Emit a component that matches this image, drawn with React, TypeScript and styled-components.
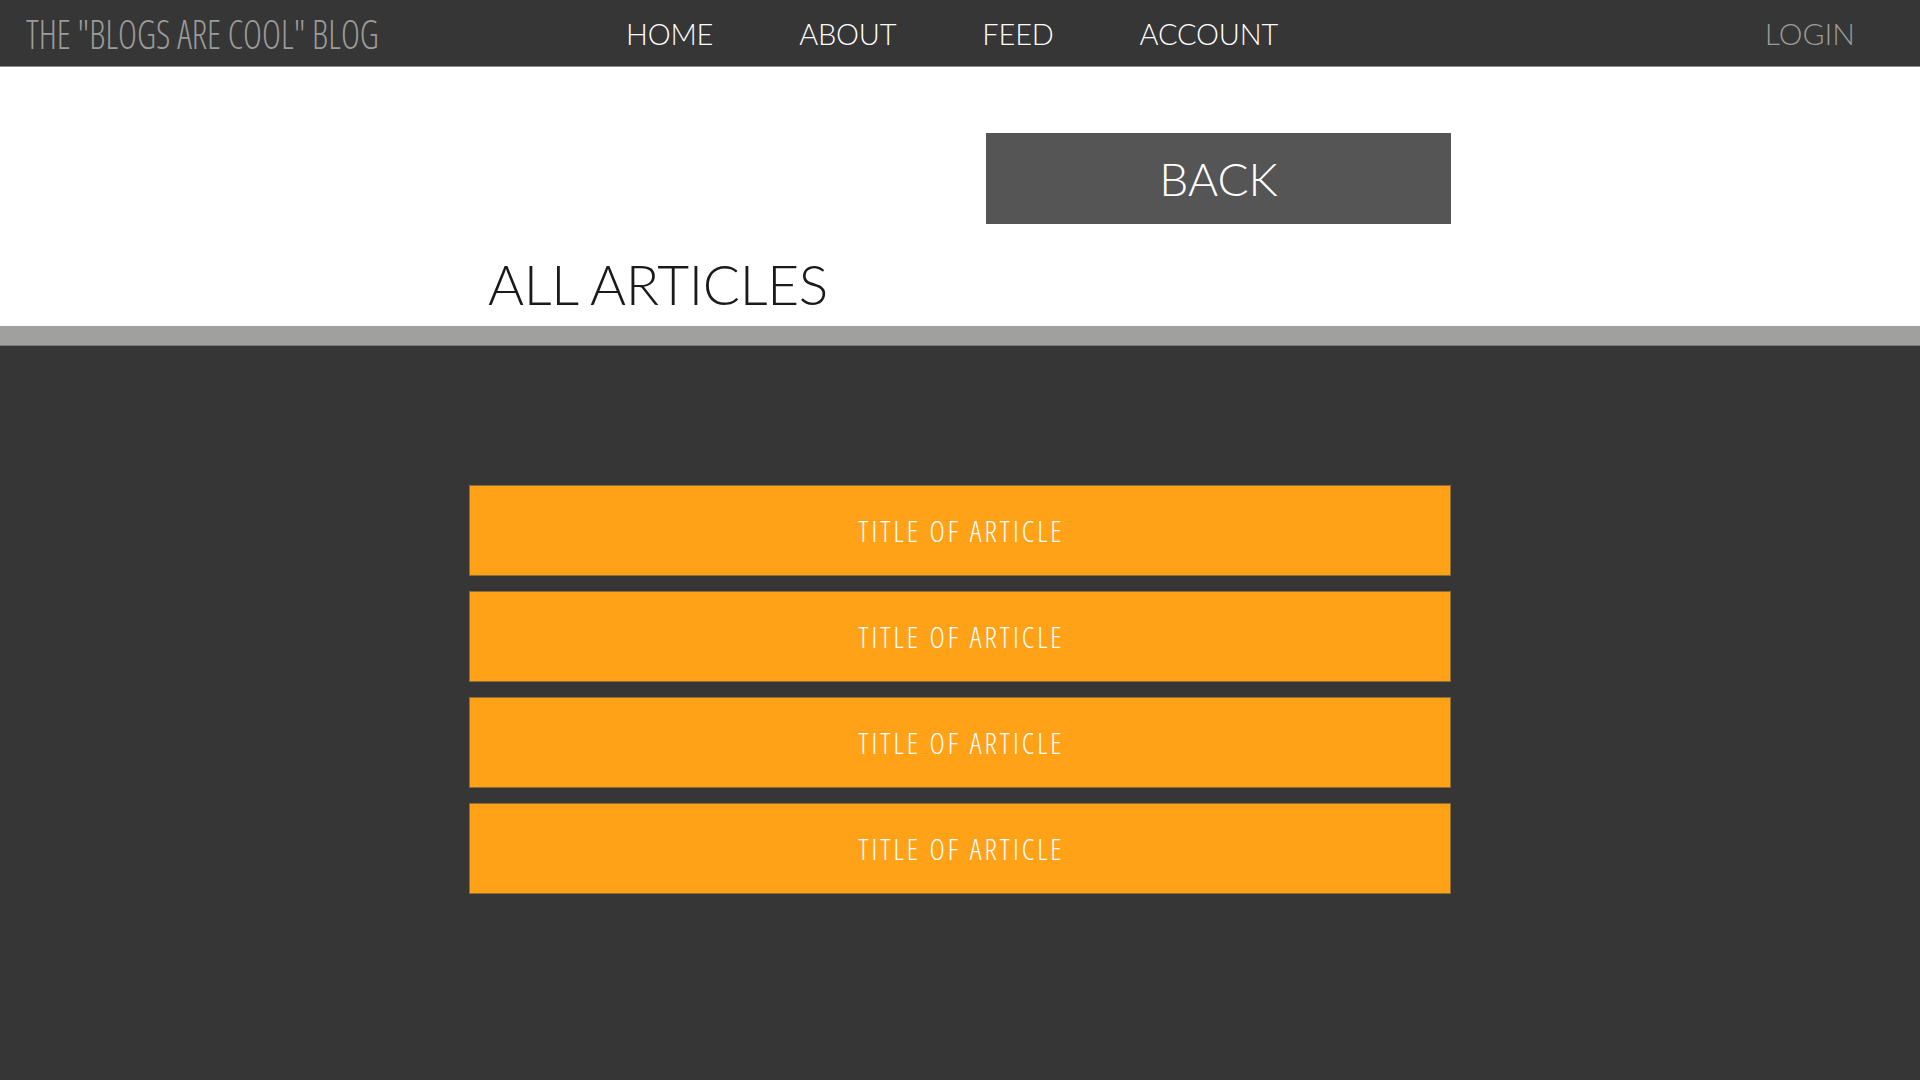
import { createGlobalStyle, styled } from "styled-components";

const GlobalStyle = createGlobalStyle`
  html, body {
    margin: 0;
    padding: 0;
    background: #363636;
  }
  * {
    box-sizing: border-box;
  }
`;

const navLinks = ["HOME", "ABOUT", "FEED", "ACCOUNT"];
const articles = [1, 2, 3, 4];

export default function App() {
  return (
    <>
      <GlobalStyle />
      <Page>
        <Header>
          <BrandBox>
            <Brand>THE "BLOGS ARE COOL" BLOG</Brand>
          </BrandBox>
          <Nav>
            {navLinks.map((link) => (
              <NavLink key={link}>{link}</NavLink>
            ))}
          </Nav>
          <Login>LOGIN</Login>
        </Header>

        <TopSection>
          <Column>
            <BackRow>
              <BackButton>BACK</BackButton>
            </BackRow>
            <Title>ALL ARTICLES</Title>
          </Column>
        </TopSection>
        <Divider />

        <ListSection>
          <ArticleList>
            {articles.map((id) => (
              <ArticleBar key={id}>TITLE OF ARTICLE</ArticleBar>
            ))}
          </ArticleList>
        </ListSection>
      </Page>
    </>
  );
}

const Page = styled.div`
  min-height: 1080px;
  display: flex;
  flex-direction: column;
  background: #363636;
`;

const Header = styled.header`
  height: 67px;
  display: grid;
  grid-template-columns: minmax(0, 1fr) auto minmax(0, 1fr);
  align-items: center;
  padding: 0 26px;
  background: #363636;
  border-bottom: 1px solid #8a8a8a;
`;

const BrandBox = styled.div`
  white-space: nowrap;
`;

// condensed display face, squeezed a touch more to match the logo width
const Brand = styled.span`
  display: inline-block;
  transform: scaleX(0.9);
  transform-origin: left center;
  font-family: "Open Sans", "Liberation Sans", sans-serif;
  font-stretch: 75%;
  font-weight: 300;
  font-size: 40px;
  color: #9b9b9b;
`;

const Nav = styled.nav`
  display: flex;
  gap: 86px;
  margin-left: -16px;
`;

const NavLink = styled.a`
  font-family: "Lato", "Liberation Sans", sans-serif;
  font-weight: 300;
  font-size: 29px;
  letter-spacing: -0.2px;
  color: #ffffff;
  cursor: pointer;
`;

const Login = styled.a`
  justify-self: end;
  margin-right: 39px;
  font-family: "Lato", "Liberation Sans", sans-serif;
  font-weight: 300;
  font-size: 30px;
  color: #9b9b9b;
  cursor: pointer;
`;

const TopSection = styled.section`
  background: #ffffff;
  padding-top: 66px;
  height: 259px;
`;

const Column = styled.div`
  width: 982px;
  margin: 0 auto;
`;

const BackRow = styled.div`
  display: flex;
  justify-content: flex-end;
`;

const BackButton = styled.button`
  width: 465px;
  height: 91px;
  border: 0;
  background: #555555;
  color: #ffffff;
  font-family: "Lato", "Liberation Sans", sans-serif;
  font-weight: 300;
  font-size: 46px;
  cursor: pointer;
`;

const Title = styled.h1`
  margin: 33px 0 0 19px;
  font-family: "Lato", "Liberation Sans", sans-serif;
  font-weight: 300;
  font-size: 55px;
  letter-spacing: -0.3px;
  line-height: 1;
  color: #1a1a1a;
`;

const Divider = styled.div`
  height: 20px;
  background: #a0a09f;
  border-bottom: 1px solid #7d7d7d;
`;

const ListSection = styled.section`
  flex: 1;
  padding-top: 139px;
`;

const ArticleList = styled.div`
  width: 982px;
  margin: 0 auto;
  display: flex;
  flex-direction: column;
  gap: 15px;
`;

const ArticleBar = styled.div`
  height: 91px;
  display: flex;
  align-items: center;
  justify-content: center;
  padding-left: 3px;
  background: #ffa218;
  border: 1px solid #8f6b35;
  font-family: "Open Sans", "Liberation Sans", sans-serif;
  font-stretch: 80%;
  font-weight: 300;
  font-size: 29px;
  letter-spacing: 3px;
  color: #ffffff;
  cursor: pointer;
`;
